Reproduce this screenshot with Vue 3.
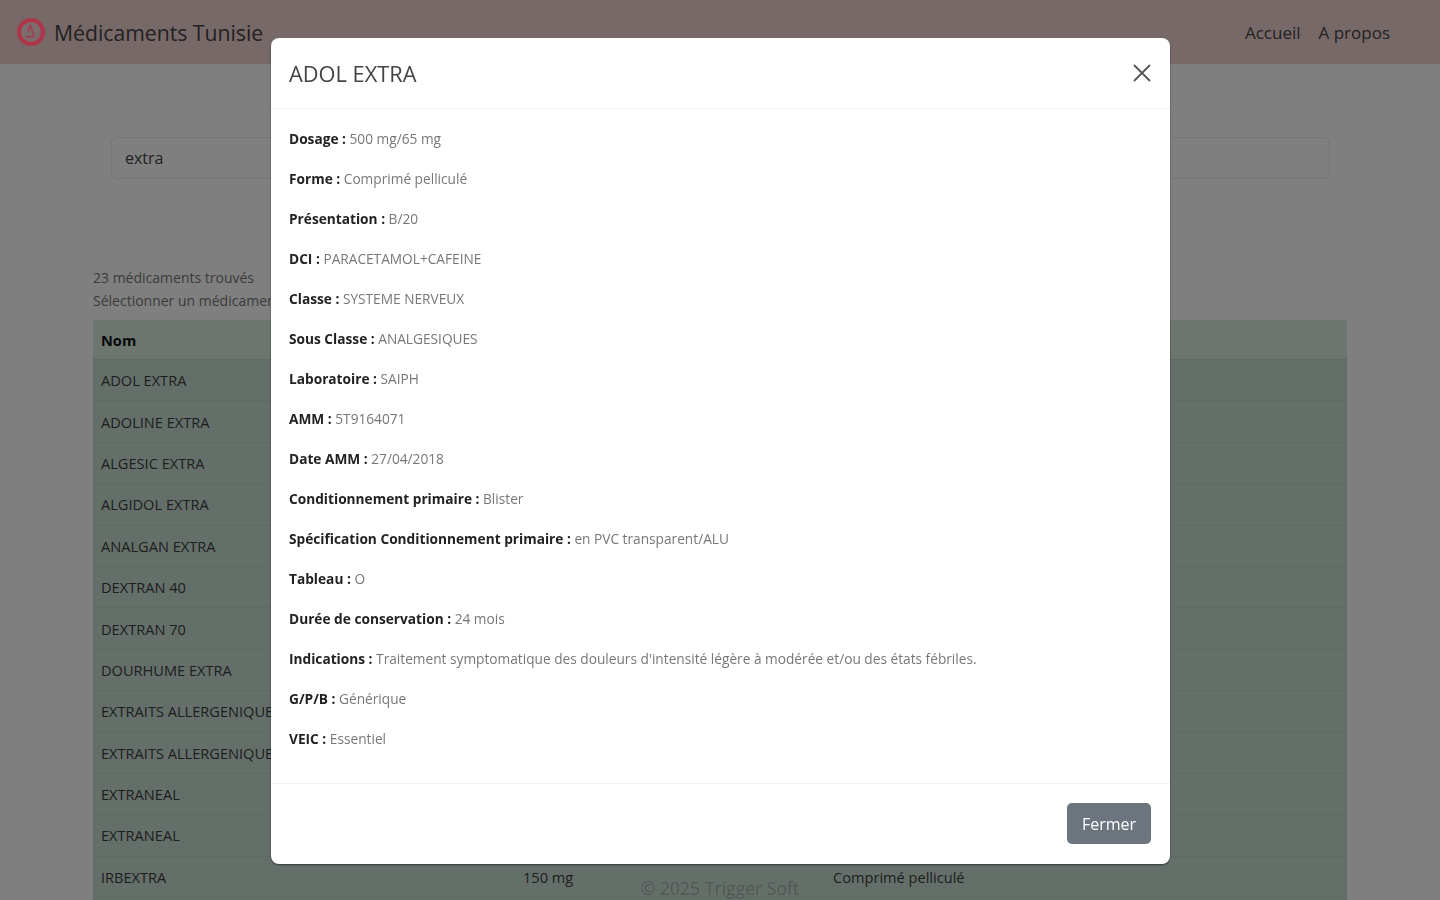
<template>
  <div class="page">
    <nav class="navbar">
      <div class="brand">
        <svg class="logo" width="30" height="30" viewBox="0 0 30 30">
          <circle cx="15" cy="15" r="12" fill="#7c6c6c" stroke="#ad3549" stroke-width="4" />
          <path d="M14 8 L12.5 15 M14.5 8.5 L18 19 M10 20 L18.5 19.5" fill="none" stroke="#a03a4c" stroke-width="1.5" />
        </svg>
        <span>Médicaments Tunisie</span>
      </div>
      <div class="nav-links">
        <a>Accueil</a>
        <a>A propos</a>
      </div>
    </nav>

    <main class="content">
      <div class="search">
        <input class="search-input" type="text" value="extra" />
      </div>
      <p class="count">23 médicaments trouvés</p>
      <p class="hint">Sélectionner un médicament</p>
      <table class="results">
        <thead>
          <tr>
            <th class="col-name">Nom</th>
            <th class="col-dose">Dosage</th>
            <th>Forme</th>
          </tr>
        </thead>
        <tbody>
          <tr v-for="(row, i) in rows" :key="i">
            <td>{{ row.name }}</td>
            <td>{{ row.dose }}</td>
            <td>{{ row.form }}</td>
          </tr>
        </tbody>
      </table>
    </main>

    <footer class="footer">© 2025 Trigger Soft</footer>

    <div class="backdrop"></div>
    <div class="modal-wrap">
      <div class="modal">
        <header class="modal-header">
          <h5>ADOL EXTRA</h5>
          <button class="close" aria-label="Fermer">
            <svg width="20" height="20" viewBox="0 0 20 20">
              <path d="M2 2 L18 18 M18 2 L2 18" stroke="#555" stroke-width="1.8" fill="none" />
            </svg>
          </button>
        </header>
        <section class="modal-body">
          <p v-for="item in details" :key="item.label">
            <strong>{{ item.label }} :</strong> {{ item.value }}
          </p>
        </section>
        <footer class="modal-footer">
          <button class="btn-close">Fermer</button>
        </footer>
      </div>
    </div>
  </div>
</template>

<script setup>
const rows = [
  { name: "ADOL EXTRA", dose: "", form: "" },
  { name: "ADOLINE EXTRA", dose: "", form: "" },
  { name: "ALGESIC EXTRA", dose: "", form: "" },
  { name: "ALGIDOL EXTRA", dose: "", form: "" },
  { name: "ANALGAN EXTRA", dose: "", form: "" },
  { name: "DEXTRAN 40", dose: "", form: "" },
  { name: "DEXTRAN 70", dose: "", form: "" },
  { name: "DOURHUME EXTRA", dose: "", form: "" },
  { name: "EXTRAITS ALLERGENIQUES", dose: "", form: "" },
  { name: "EXTRAITS ALLERGENIQUES", dose: "", form: "" },
  { name: "EXTRANEAL", dose: "", form: "" },
  { name: "EXTRANEAL", dose: "", form: "" },
  { name: "IRBEXTRA", dose: "150 mg", form: "Comprimé pelliculé" },
  // the next row starts at the fold, only its background shows
  { name: "", dose: "", form: "" },
];

const details = [
  { label: "Dosage", value: "500 mg/65 mg" },
  { label: "Forme", value: "Comprimé pelliculé" },
  { label: "Présentation", value: "B/20" },
  { label: "DCI", value: "PARACETAMOL+CAFEINE" },
  { label: "Classe", value: "SYSTEME NERVEUX" },
  { label: "Sous Classe", value: "ANALGESIQUES" },
  { label: "Laboratoire", value: "SAIPH" },
  { label: "AMM", value: "5T9164071" },
  { label: "Date AMM", value: "27/04/2018" },
  { label: "Conditionnement primaire", value: "Blister" },
  { label: "Spécification Conditionnement primaire", value: "en PVC transparent/ALU" },
  { label: "Tableau", value: "O" },
  { label: "Durée de conservation", value: "24 mois" },
  {
    label: "Indications",
    value: "Traitement symptomatique des douleurs d'intensité légère à modérée et/ou des états fébriles.",
  },
  { label: "G/P/B", value: "Générique" },
  { label: "VEIC", value: "Essentiel" },
];
</script>

<style>
html,
body {
  margin: 0;
  height: 100%;
  overflow: hidden;
  background: #fff;
}
</style>

<style scoped>
.page {
  height: 900px;
  overflow: hidden;
  font-family: "Open Sans", "Liberation Sans", sans-serif;
  color: #212529;
  font-size: 14px;
}

.navbar {
  height: 64px;
  box-sizing: border-box;
  padding: 1px 50px 0 16px;
  display: flex;
  align-items: center;
  justify-content: space-between;
  background: #f1d2d2;
}
.brand {
  display: flex;
  align-items: center;
  gap: 8px;
  font-size: 21.2px;
  color: #444;
}
.logo {
  display: block;
  position: relative;
  z-index: 3;
  margin-top: -1px;
}
.nav-links {
  display: flex;
  gap: 18px;
  font-size: 17px;
  color: #444;
}

.content {
  padding: 73px 93px 0;
}
.search {
  padding: 0 17px 0 18px;
  margin-bottom: 87px;
}
.search-input {
  display: block;
  width: 100%;
  height: 42px;
  box-sizing: border-box;
  padding: 0 13px;
  border: 1px solid #eaeaea;
  border-radius: 6px;
  background: #fff;
  font: inherit;
  font-size: 16px;
  color: #444;
}
.count,
.hint {
  margin: 0;
  height: 23px;
  line-height: 23px;
  font-size: 14px;
  color: #777;
}
.hint {
  margin-bottom: 8px;
}

.results {
  width: 1254px;
  border-collapse: collapse;
  table-layout: fixed;
  font-size: 14.6px;
}
.col-name {
  width: 422px;
  box-sizing: border-box;
}
.col-dose {
  width: 310px;
  box-sizing: border-box;
}
th,
td {
  padding: 0 8px;
  text-align: left;
  color: #3c3c3c;
  border-bottom: 1px solid #c0d3c9;
}
th {
  height: 39px;
  font-weight: 700;
  color: #111;
  background: #d8ecdf;
}
td {
  height: 40.4px;
  background: #cbdfd5;
}

.footer {
  position: fixed;
  left: 0;
  right: 0;
  bottom: 0;
  line-height: 24px;
  text-align: center;
  font-size: 17.6px;
  color: #a3b0a9;
}

.backdrop {
  position: fixed;
  inset: 0;
  background: rgba(0, 0, 0, 0.5);
}
.modal-wrap {
  position: fixed;
  inset: 0;
  display: flex;
  justify-content: center;
  padding-top: 38px;
}
.modal {
  width: 899px;
  height: 826px;
  margin-left: 1px;
  box-sizing: border-box;
  display: flex;
  flex-direction: column;
  background: #fff;
  border-radius: 8px;
  box-shadow: 0 1px 2px rgba(0, 0, 0, 0.5);
}
.modal-header {
  height: 71px;
  box-sizing: border-box;
  padding: 0 18px;
  display: flex;
  align-items: center;
  justify-content: space-between;
  border-bottom: 1px solid #f1f2f3;
}
h5 {
  margin: 0;
  font-size: 21.8px;
  font-weight: 400;
  color: #444;
}
.close {
  padding: 0;
  border: none;
  background: transparent;
  display: flex;
  cursor: pointer;
}
.modal-body {
  flex: 1;
  padding: 18px 18px 0;
}
.modal-body p {
  margin: 0 0 16px;
  line-height: 24px;
  font-size: 13.7px;
  color: #777;
  white-space: nowrap;
}
.modal-body strong {
  color: #222;
  font-weight: 700;
}
.modal-footer {
  height: 81px;
  box-sizing: border-box;
  padding: 19px 19px 0 0;
  display: flex;
  align-items: flex-start;
  justify-content: flex-end;
  border-top: 1px solid #f1f2f3;
}
.btn-close {
  width: 84px;
  height: 41px;
  border: none;
  border-radius: 5px;
  background: #6c757d;
  color: #fff;
  font: inherit;
  font-size: 16px;
  cursor: pointer;
}
</style>
